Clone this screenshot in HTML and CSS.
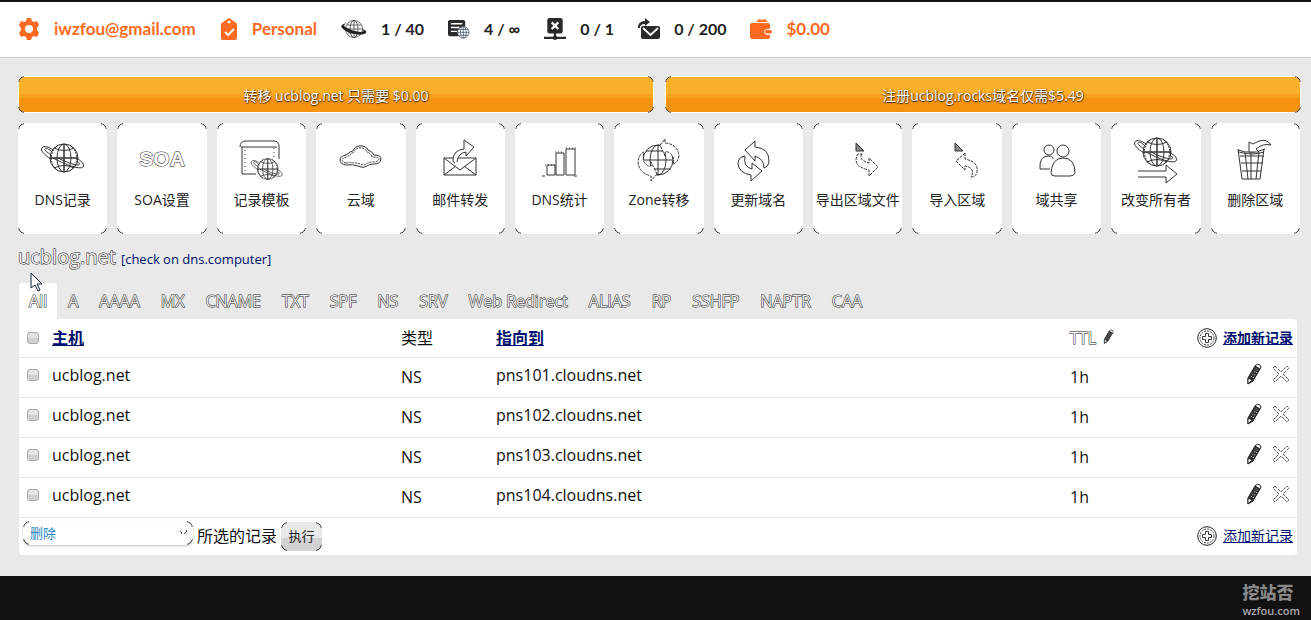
FILE: index.html
```html
<!DOCTYPE html>
<html lang="zh-CN">
<head>
<meta charset="utf-8">
<title>ucblog.net</title>
<link rel="stylesheet" href="styles.css">
</head>
<body>
<svg class="defs" aria-hidden="true">
  <symbol id="globe" viewBox="0 0 46 32">
    <path d="M11 17C4 13 0 8 2 6c2-3 7-1 11 2M36 16c6 3 9 7 7 9-3 3-17-2-30-9M37 19c3 2 3 4 1 4-4 0-12-3-20-7M11 13C7 10 4 8 5 7c1-2 4 0 7 3"/>
    <g><circle cx="24" cy="16" r="14"/><ellipse cx="24" cy="16" rx="7" ry="14"/><path stroke-width="1.500" d="M24 2v28M10 16h28"/><path d="M14 6q10 5 20 0M14 26q10-5 20 0"/></g>
    <path stroke-dasharray="2 1" d="M18 3C9 10 9 22 18 29M30 3c9 7 9 19 0 26"/>
  </symbol>
  <symbol id="pencil" viewBox="0 0 16 22">
    <path fill="#333" stroke="#222" d="M2 15 9 3l5 3-7 12-5 3z"/><path fill="#fff" stroke="#222" d="M9 3q2-3 5-1 2 2 0 4zM2 15l4 2-4 4z"/><path stroke="#ddd" stroke-dasharray="1 2" d="M5 14 11 5M7 15l5-8"/>
  </symbol>
  <symbol id="cross" viewBox="0 0 18 18">
    <path stroke="#555" fill="#fff" stroke-dasharray="3 1" d="M3 1l6 6 6-6 2 2-6 6 6 6-2 2-6-6-6 6-2-2 6-6-6-6z"/>
  </symbol>
  <symbol id="plus" viewBox="0 0 20 20">
    <circle cx="10" cy="10" r="9.300" stroke="#222"/><circle cx="10" cy="10" r="7" stroke="#444" stroke-dasharray="2 1"/><path stroke="#222" stroke-width=".9" d="M8.500 5.500h3v3h3v3h-3v3h-3v-3h-3v-3h3z"/>
  </symbol>
</svg>

<header class="topbar">
  <a class="stat accent" href="#"><svg class="ico" viewBox="0 0 22 22"><path fill="#ff6a22" fill-rule="evenodd" d="M9 0h4l1 3 2 1 3-1 2 4-2 3v2l2 3-2 4-3-1-2 1-1 3H9l-1-3-2-1-3 1-2-4 2-3v-2L1 7l2-4 3 1 2-1zM11 7a4 4 0 1 0 0 8 4 4 0 0 0 0-8z"/></svg><span>iwzfou@gmail.com</span></a>
  <a class="stat accent" href="#"><svg class="ico slim" viewBox="0 0 16 22"><path fill="#ff6a22" d="M8 0l6 4q2 1 2 3v13q0 2-2 2H2q-2 0-2-2V7q0-2 2-3z"/><circle cx="8" cy="4" r="1.500" fill="#fff"/><path d="M4 14l3 3 6-6" fill="none" stroke="#fff" stroke-width="2"/></svg><span>Personal</span></a>
  <div class="stat"><svg class="ico wide" viewBox="0 0 26 18"><g fill="none" stroke="#444" stroke-width=".8"><circle cx="13" cy="9" r="8.500" fill="#fff"/><ellipse cx="13" cy="9" rx="4" ry="8.500"/><path d="M13 1v16M5 9h16M6 5h14M7 13h12"/></g><path fill="#222" d="M6 3C1 4-1 6 1 8c4 5 19 9 24 5 1-2-1-3-4-4 2 2 2 3-1 3C14 12 5 8 3 6c0-1 1-2 3-3z"/></svg><span>1 / 40</span></div>
  <div class="stat"><svg class="ico" viewBox="0 0 23 21"><path fill="#2a2a2d" d="M2 1h14q2 0 2 2v5l-3 1-4 4v5H2q-2 0-2-2V3q0-2 2-2z"/><path stroke="#fff" stroke-width="1.500" d="M3 5h12M3 9h9M3 13h7"/><g fill="#fff" stroke="#456" stroke-width=".8"><circle cx="16" cy="14" r="6"/><ellipse cx="16" cy="14" rx="3" ry="6"/><path d="M16 8v12M10 14h12M11 11h10M11 17h10"/></g></svg><span>4 / ∞</span></div>
  <div class="stat"><svg class="ico" viewBox="0 0 20 20"><rect x="3" width="14" height="14" rx="2" fill="#2a2a2d"/><path d="M7 4l6 6M13 4l-6 6" stroke="#fff" stroke-width="2"/><path d="M10 13v4M0 18h20M7 18h6" stroke="#2a2a2d" stroke-width="2"/><circle cx="10" cy="18" r="2" fill="#2a2a2d"/></svg><span>0 / 1</span></div>
  <div class="stat"><svg class="ico" viewBox="0 0 22 22"><rect x="3" y="8" width="19" height="13" rx="2" fill="#2a2a2d"/><path d="M5 10l7.500 7L20 10" fill="none" stroke="#fff" stroke-width="1.800"/><path fill="#2a2a2d" d="M0 10C0 5 3 3 7 3V0l5 4-5 4V6C4 6 2 7 2 10z"/></svg><span>0 / 200</span></div>
  <a class="stat accent" href="#"><svg class="ico" viewBox="0 0 22 20"><path fill="#ff6a22" d="M6 3l3-3 3 1 3-1 3 3zM2 4h16q2 0 2 2v4h-3q-3 1-3 3t3 3h3v2q0 2-2 2H2q-2 0-2-2V6q0-2 2-2z"/><rect x="15" y="11" width="7" height="3.500" rx="1.700" fill="#ff6a22"/></svg><span>$0.00</span></a>
</header>

<main class="page">
  <div class="offers">
    <button class="offer corners">转移 ucblog.net 只需要 $0.00</button>
    <button class="offer corners">注册ucblog.rocks域名仅需$5.49</button>
  </div>

  <nav class="tools">
    <a class="tool corners" href="#"><svg viewBox="0 0 46 46"><use href="#globe" y="6" width="46" height="32"/></svg><span>DNS记录</span></a>
    <a class="tool corners" href="#"><b class="soa">SOA</b><span>SOA设置</span></a>
    <a class="tool corners" href="#"><svg viewBox="0 0 46 46"><path d="M2 11q0-6 6-6h28q5 0 5 6v12M3 11h36M4 11v27h14"/><path stroke-dasharray="1 3" d="M7 14v21M36 12v12"/><use href="#globe" x="12" y="20" width="34" height="26"/></svg><span>记录模板</span></a>
    <a class="tool corners" href="#"><svg viewBox="0 0 46 46"><path d="M8 29q-6-1-6-5t6-5q2-1 4-3 3 0 4-3 3-4 9-3 4 1 5 4 4 1 6 5 7 0 7 4-1 5-7 5-5 0-7 2-4 3-9 0-5-2-12-1z"/><path stroke-dasharray="2 1" d="M8 27q-4-1-4-3t5-3q3-2 5-4 2 0 3-3 3-3 7-2 4 1 5 4 4 1 5 5 7 0 7 2-1 3-6 3-4 0-7 2-3 2-6 0-5-2-14-1z"/></svg><span>云域</span></a>
    <a class="tool corners" href="#"><svg viewBox="0 0 46 46"><path d="M7 22h32v17H7zM7 22l16 12 16-12M7 39l12-9M39 39l-12-9"/><path fill="#fff" d="M18 27q-3-1-2-4 1-9 11-10V4l10 7-8 9v-4q-8 1-9 10"/></svg><span>邮件转发</span></a>
    <a class="tool corners" href="#"><svg viewBox="0 0 46 46"><path d="M5 40h3M37 40h3M10 39V29h8v10zM19 39V17h8v22zM29 39V13h9v26z"/><path stroke-dasharray="1 2" d="M8 29h10M18 16h9M29 12h10"/></svg><span>DNS统计</span></a>
    <a class="tool corners" href="#"><svg viewBox="0 0 46 46"><circle cx="22" cy="24" r="15"/><ellipse cx="22" cy="24" rx="8" ry="15"/><path d="M22 9v30M7 24h30M10 15h25M10 33h25"/><path fill="#fff" stroke-dasharray="3 1" d="M24 9l5-6v4q12 1 14 12-1 8-6 9 2-6-2-10-3-3-6-2v4zM21 38l-6 7v-5Q3 37 2 26q1-8 6-10-2 8 1 11 3 4 6 3v-4z"/></svg><span>Zone转移</span></a>
    <a class="tool corners" href="#"><svg viewBox="0 0 46 46"><path d="M10 14 20 5v6q14 1 14 14 0 5-5 7 0-9-9-12v5zM10 20q-7 1-7 8 1 9 13 11v6l11-10-10-8v6q-9-2-7-13z"/></svg><span>更新域名</span></a>
    <a class="tool corners" href="#"><svg viewBox="0 0 46 46"><path d="M21 7v8h8z" fill="#888"/><path d="M27 18q-4 6 7 9v-5l9 9-9 9v-6q-18-4-11-16z" stroke-dasharray="3 1"/></svg><span>导出区域文件</span></a>
    <a class="tool corners" href="#"><svg viewBox="0 0 46 46"><path d="M21 7v8h8z" fill="#888"/><path d="M31 17v6q14 3 12 13-1 5-6 5 5-9-6-11v4l-9-9z" stroke-dasharray="3 1"/></svg><span>导入区域</span></a>
    <a class="tool corners" href="#"><svg viewBox="0 0 46 46"><circle cx="15" cy="14" r="5"/><circle cx="29" cy="15" r="6"/><path d="M6 33q-1-13 8-13 5 0 5 3M6 33h10M17 37q1-15 12-15 12 0 12 15-1 3-5 3H21q-4 0-4-3z"/></svg><span>域共享</span></a>
    <a class="tool corners" href="#"><svg viewBox="0 0 46 46"><use href="#globe" y="0" width="46" height="32"/><path fill="#fff" d="M5 35h28v-6l11 9-11 9v-6H5"/></svg><span>改变所有者</span></a>
    <a class="tool corners" href="#"><svg viewBox="0 0 46 46"><path d="M6 13l4 30h18l4-30M6 14q13 5 27-1M7 16q13 4 25 0M8 20h24M9 27h22M10 35h19M13 16l3 27M19 17v26M27 16l-3 27"/><path fill="#fff" d="M17 6v10h10l-3-3q7-6 15-4-5-9-18-1z"/></svg><span>删除区域</span></a>
  </nav>

  <div class="zone">
    <h1 class="outline">ucblog.net</h1>
    <a href="#">[check on dns.computer]</a>
    <svg class="pointer" viewBox="0 0 13 20"><path fill="#fff" stroke="#123" d="M1 1v15l4-3 3 6 2-1-3-6h5z"/></svg>
  </div>

  <nav class="tabs outline">
    <a class="on" href="#">All</a><a href="#">A</a><a href="#">AAAA</a><a href="#">MX</a><a href="#">CNAME</a><a href="#">TXT</a><a href="#">SPF</a><a href="#">NS</a><a href="#">SRV</a><a href="#">Web Redirect</a><a href="#">ALIAS</a><a href="#">RP</a><a href="#">SSHFP</a><a href="#">NAPTR</a><a href="#">CAA</a>
  </nav>

  <section class="panel">
    <table class="records">
      <thead><tr>
        <th class="c-check"><input type="checkbox" aria-label="全选"></th><th class="c-host"><a href="#">主机</a></th><th class="c-type">类型</th><th class="c-dest"><a href="#">指向到</a></th>
        <th class="c-ttl"><span class="ttl">TTL</span> <svg class="pen small"><use href="#pencil"/></svg></th>
        <th class="c-act"><a class="add" href="#"><svg><use href="#plus"/></svg><span>添加新记录</span></a></th>
      </tr></thead>
      <tbody>
        <tr><td><input type="checkbox" aria-label="pns101"></td><td>ucblog.net</td><td class="low">NS</td><td>pns101.cloudns.net</td><td class="low">1h</td><td><div class="acts"><button aria-label="编辑"><svg class="pen"><use href="#pencil"/></svg></button><button aria-label="删除"><svg class="del"><use href="#cross"/></svg></button></div></td></tr>
        <tr><td><input type="checkbox" aria-label="pns102"></td><td>ucblog.net</td><td class="low">NS</td><td>pns102.cloudns.net</td><td class="low">1h</td><td><div class="acts"><button aria-label="编辑"><svg class="pen"><use href="#pencil"/></svg></button><button aria-label="删除"><svg class="del"><use href="#cross"/></svg></button></div></td></tr>
        <tr><td><input type="checkbox" aria-label="pns103"></td><td>ucblog.net</td><td class="low">NS</td><td>pns103.cloudns.net</td><td class="low">1h</td><td><div class="acts"><button aria-label="编辑"><svg class="pen"><use href="#pencil"/></svg></button><button aria-label="删除"><svg class="del"><use href="#cross"/></svg></button></div></td></tr>
        <tr><td><input type="checkbox" aria-label="pns104"></td><td>ucblog.net</td><td class="low">NS</td><td>pns104.cloudns.net</td><td class="low">1h</td><td><div class="acts"><button aria-label="编辑"><svg class="pen"><use href="#pencil"/></svg></button><button aria-label="删除"><svg class="del"><use href="#cross"/></svg></button></div></td></tr>
      </tbody>
    </table>
    <div class="bulk">
      <div class="pick corners"><select id="action"><option>删除</option></select></div>
      <label for="action">所选的记录</label>
      <button class="run corners">执行</button>
      <a class="add" href="#"><svg><use href="#plus"/></svg><span>添加新记录</span></a>
    </div>
  </section>
</main>

<footer class="foot"><div class="mark"><b>挖站否</b><span>wzfou.com</span></div></footer>
</body>
</html>
```

FILE: styles.css
```css
* { box-sizing: border-box; }
body {
  margin: 0;
  min-height: 100vh;
  display: flex;
  flex-direction: column;
  background: #e9e9e9;
  color: #111;
  font: 16px/22px "Open Sans", "Noto Sans CJK SC", sans-serif;
}
a { color: #00106e; }
svg { fill: none; display: block; }
button, select { font: inherit; }
.defs { position: absolute; width: 0; height: 0; }

.topbar {
  display: flex;
  align-items: center;
  gap: 24px;
  height: 58px;
  padding: 0 18px 2px;
  background: #fff;
  border-top: 2px solid #111;
  border-bottom: 1px solid #ccc;
  font-family: Lato, "Noto Sans", sans-serif;
  font-size: 16px;
  font-weight: 700;
  color: #222;
}
.stat { display: flex; align-items: center; gap: 14px; color: inherit; text-decoration: none; }
.stat.accent { color: #ff6a22; font-size: 17px; }
.ico { width: 22px; height: 22px; }
.ico.slim { width: 18px; }
.ico.wide { width: 26px; height: 18px; }

.page { padding: 18px 10px 21px 18px; }

.corners { position: relative; border-radius: 7px; }
.corners::after {
  content: "";
  position: absolute;
  inset: 0;
  border: 1px solid #111;
  border-radius: inherit;
  pointer-events: none;
  mask: linear-gradient(#000 0 0) 0 0 / 6px 6px no-repeat,
        linear-gradient(#000 0 0) 100% 0 / 6px 6px no-repeat,
        linear-gradient(#000 0 0) 0 100% / 6px 6px no-repeat,
        linear-gradient(#000 0 0) 100% 100% / 6px 6px no-repeat;
}

.offers { display: grid; grid-template-columns: 1fr 1fr; gap: 11px; }
.offer {
  height: 37px;
  padding: 2px 0 0;
  border: 0;
  box-shadow: inset 0 0 0 1px #fff;
  background: linear-gradient(#fbb02a 0 18px, #f8a31f 18px 22px, #f59310 22px);
  color: #fff;
  font-size: 14px;
  text-shadow: 0 1px 1px #412500, 1px 0 1px #6b3d00;
}

.tools { display: grid; grid-template-columns: repeat(13, minmax(0, 1fr)); gap: 10px; margin: 10px 1px 0 0; }
.tool {
  display: flex;
  flex-direction: column;
  align-items: center;
  gap: 7px;
  height: 111px;
  padding-top: 13px;
  background: #fff;
  color: #222;
  font-size: 14px;
  text-decoration: none;
  white-space: nowrap;
}
.tool svg { width: 46px; height: 46px; stroke: #333; overflow: visible; }
.soa {
  height: 46px;
  font: 700 21px/46px "Liberation Sans", sans-serif;
  color: #fff;
  -webkit-text-stroke: 1px #222;
  paint-order: stroke fill;
}

.outline, .ttl { -webkit-text-stroke: 1px #222; paint-order: stroke fill; }
.zone { position: relative; display: flex; align-items: baseline; gap: 5px; padding: 9px 0 0; }
.zone h1 { margin: 0; font-size: 20px; line-height: 28px; font-weight: 400; color: #e9e9e9; }
.zone a { font-size: 13px; text-decoration: none; }
.pointer { position: absolute; left: 12px; top: 38px; width: 13px; height: 20px; }

.tabs { display: flex; gap: 1px; margin: 12px 0 0 1px; }
.tabs a { padding: 7px 10px; color: #e9e9e9; text-decoration: none; }
.tabs .on { background: #fff; color: #fff; border-radius: 4px 4px 0 0; }

.panel { margin: 0 4px 0 1px; background: #fff; border-radius: 0 4px 4px 4px; }
.records { width: 100%; table-layout: fixed; border-collapse: collapse; }
.records th, .records td { height: 40px; padding: 0; border-bottom: 1px solid #e5e5e5; text-align: left; vertical-align: middle; }
.records th { height: 38px; }
.records td { padding-bottom: 4px; }
.records td.low { padding-bottom: 1px; }
.records .c-check { width: 33px; }
.records .c-host { width: 349px; }
.records .c-type { width: 95px; font-weight: 400; }
.records .c-ttl { width: 120px; font-weight: 400; }
.records .c-act { width: 107px; }
.ttl { color: #fff; }
input[type="checkbox"] {
  appearance: none;
  display: block;
  width: 12px;
  height: 12px;
  margin: 0 0 0 8px;
  border: 1px solid #aaa;
  border-radius: 3px;
  background: linear-gradient(#e4e4e4 50%, #d0d0d0 50%);
}
.pen { width: 16px; height: 22px; }
.pen.small { display: inline-block; width: 11px; height: 15px; margin-left: 3px; }
.del { width: 18px; height: 18px; }
.acts { display: flex; justify-content: flex-end; align-items: center; gap: 10px; padding: 0 7px 2px 0; }
.acts button { border: 0; padding: 0; background: none; }
.add { display: flex; align-items: center; justify-content: flex-end; gap: 6px; font-size: 14px; white-space: nowrap; }
.c-act .add { margin-right: 4px; }
.add svg { width: 20px; height: 20px; }

.bulk { display: flex; align-items: center; gap: 4px; height: 37px; padding: 0 4px; }
.pick { width: 170px; height: 24px; margin-bottom: 6px; box-shadow: 0 1px 2px #bbb; }
.pick select {
  appearance: none;
  width: 100%;
  height: 24px;
  padding: 0 7px;
  border: 0;
  border-radius: 7px;
  background: linear-gradient(45deg, transparent 50%, #555 50% 60%, transparent 60%) right 10px center / 4px 6px no-repeat,
              linear-gradient(-45deg, transparent 50%, #555 50% 60%, transparent 60%) right 6px center / 4px 6px no-repeat, #fff;
  color: #2786c8;
  font-size: 13px;
}
.run {
  width: 41px;
  height: 29px;
  padding: 0;
  border: 0;
  background: linear-gradient(#e9e9e9 55%, #d2d2d2 55%);
  color: #222;
  font-size: 13px;
}
.bulk > .add { margin-left: auto; }

.foot { flex: 1; display: flex; justify-content: flex-end; padding: 6px 11px 2px; background: #111; }
.mark { display: flex; flex-direction: column; color: #aaa; font-size: 11px; line-height: 14px; }
.mark b { font-size: 17px; line-height: 22px; font-weight: 900; color: #888; }
.mark span { font-weight: 600; }
```
